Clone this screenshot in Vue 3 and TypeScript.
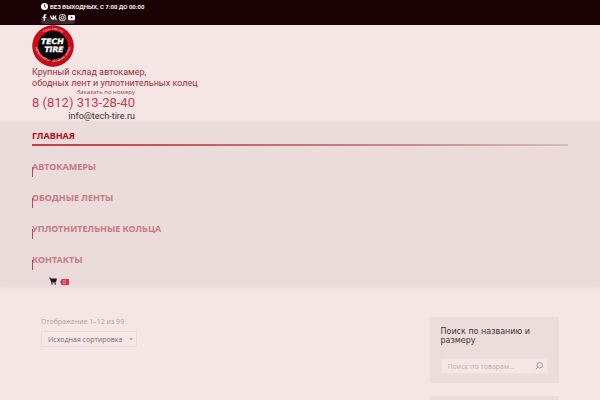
<script setup lang="ts">
import { ref } from 'vue'

const links = ['АВТОКАМЕРЫ', 'ОБОДНЫЕ ЛЕНТЫ', 'УПЛОТНИТЕЛЬНЫЕ КОЛЬЦА', 'КОНТАКТЫ']
const sort = ref('default')
const query = ref('')
</script>

<template>
  <div class="page">
    <div class="topbar">
      <div class="hours">
        <svg class="clock" viewBox="0 0 14 14" aria-hidden="true">
          <circle cx="7" cy="7" r="7" fill="#fff" />
          <path d="M7 2.500V7.500L10 9" fill="none" stroke="#1b0305" stroke-width="1.600" />
        </svg>
        <span>БЕЗ ВЫХОДНЫХ, С 7:00 ДО 00:00</span>
      </div>
      <div class="social">
        <a href="#" aria-label="Facebook">
          <svg viewBox="0 0 16 16"><path fill="#fff" d="M6 15.500V9H3.700V6H6V4.300C6 1.800 7.400.5 9.700.5h2.500v2.900h-1.600c-1 0-1.300.4-1.300 1.200V6h2.900l-.5 3H9.300v6.500z" /></svg>
        </a>
        <a href="#" aria-label="VK">
          <svg viewBox="0 0 16 16"><path fill="#fff" d="M8.600 13C3.600 13 .3 9.500 0 3.300h2.900c.1 4 1.500 5.600 3 6V3.300h3.200v3.300c1.200-.2 2.400-1.600 2.900-3.300h3c-.4 2-1.900 3.800-3.100 4.400 1.200.6 3 2.100 3.900 5.300h-3.300c-.6-1.700-1.700-2.900-3.400-3.100V13z" /></svg>
        </a>
        <a href="#" aria-label="Instagram">
          <svg viewBox="0 0 16 16" fill="none" stroke="#fff" stroke-width="2"><rect x="1.500" y="1.500" width="13" height="13" rx="3.500" /><circle cx="8" cy="8" r="3" /><circle cx="11.700" cy="4.300" r=".3" /></svg>
        </a>
        <a href="#" aria-label="YouTube">
          <svg viewBox="0 0 16 16"><path fill="#fff" fill-rule="evenodd" d="M3.500 2h9C15 2 16 3 16 5.500v5c0 2.500-1 3.500-3.500 3.500h-9C1 14 0 13 0 10.500v-5C0 3 1 2 3.500 2zM6.300 5v6L11.300 8z" /></svg>
        </a>
      </div>
    </div>

    <header class="brand">
      <a class="logo" href="#" aria-label="Tech Tire">
        <svg viewBox="0 0 126 126">
          <defs>
            <path id="ring-top" d="M15 63a48 48 0 0 1 96 0" />
            <path id="ring-bottom" d="M8 55a55 55 0 0 0 110 0" />
          </defs>
          <circle cx="63" cy="63" r="62" fill="#cf0a18" />
          <circle cx="63" cy="63" r="60" fill="none" stroke="#a30d17" stroke-width="2" />
          <circle cx="63" cy="63" r="45" fill="#0b0607" />
          <g class="ring-text">
            <text><textPath href="#ring-top" startOffset="50%" text-anchor="middle">TECH-TIRE.RU</textPath></text>
            <text><textPath href="#ring-bottom" startOffset="50%" text-anchor="middle">АВТОКАМЕРЫ • ОБОДНЫЕ ЛЕНТЫ</textPath></text>
          </g>
          <g class="logo-text">
            <text x="61" y="58" text-anchor="middle">TECH</text>
            <text x="66" y="81" text-anchor="middle">TIRE</text>
          </g>
        </svg>
      </a>
      <p class="tagline">Крупный склад автокамер,<br />ободных лент и уплотнительных колец</p>
      <div class="contacts">
        <span class="order">Заказать по номеру</span>
        <a class="phone" href="tel:88123132840">8 (812) 313-28-40</a>
        <a class="mail" href="mailto:info@tech-tire.ru">info@tech-tire.ru</a>
      </div>
    </header>

    <nav class="menu">
      <a class="item active" href="#">ГЛАВНАЯ</a>
      <a v-for="link in links" :key="link" class="item" href="#">{{ link }}</a>
      <a class="cart" href="#" aria-label="Корзина">
        <svg viewBox="0 0 16 16"><path fill="#231819" d="M0 1h3l.7 2H16l-2 7H5.500l.3 1.200H14v1.300H4.600L2 2.500H0z" /><circle cx="6" cy="14.200" r="1.500" fill="#231819" /><circle cx="12.500" cy="14.200" r="1.500" fill="#231819" /></svg>
        <span class="count">0</span>
      </a>
    </nav>

    <main class="content">
      <section class="listing">
        <p class="result">Отображение 1–12 из 99</p>
        <div class="sort">
          <select v-model="sort" aria-label="Сортировка">
            <option value="default">Исходная сортировка</option>
          </select>
          <svg viewBox="0 0 8 6" aria-hidden="true"><path d="M1.500 2h5L4 4.500z" fill="#a39696" /></svg>
        </div>
      </section>
      <aside class="sidebar">
        <section class="widget">
          <h2>Поиск по названию и размеру</h2>
          <form class="search" @submit.prevent>
            <input v-model="query" type="search" aria-label="Поиск по товарам" placeholder="Поиск по товарам…" />
            <button type="submit" aria-label="Найти">
              <svg viewBox="0 0 16 16" fill="none" stroke="#9b8c8d" stroke-width="1.700"><circle cx="9.500" cy="6.500" r="5.500" /><path d="M5.600 10.400L1.500 14.500" /></svg>
            </button>
          </form>
        </section>
        <section class="widget next"></section>
      </aside>
    </main>
  </div>
</template>

<style>
body {
  margin: 0;
  background: #f5e5e4;
}
</style>

<style scoped>
.page {
  height: 100vh;
  overflow: hidden;
  background: #f5e5e4;
  font-family: "Open Sans", "Noto Sans", sans-serif;
}
a {
  color: inherit;
  text-decoration: none;
}
svg {
  display: block;
}
.topbar {
  display: flex;
  flex-direction: column;
  align-items: flex-start;
  gap: 1px;
  height: 25px;
  padding: 1px 41px 0;
  box-sizing: border-box;
  background: #1b0305;
}
.hours {
  display: flex;
  align-items: center;
  gap: 2px;
  height: 11px;
  color: #f7eeee;
  font: 700 6px/11px Roboto, sans-serif;
}
.clock {
  width: 7px;
  height: 7px;
}
.social {
  display: flex;
  gap: 2px;
  height: 11px;
  padding: 1px 0 0;
  box-sizing: border-box;
  border-radius: 0 0 3px 3px;
  background: linear-gradient(#1b0305 30%, #41292d 60%);
}
.social a {
  display: block;
}
.social svg {
  width: 7px;
  height: 7px;
}
.brand {
  display: flex;
  flex-direction: column;
  align-items: flex-start;
  padding: 0 32px;
}
.logo svg {
  width: 42px;
  height: 42px;
}
.logo-text {
  fill: #fff;
  stroke: #fff;
  stroke-width: 1px;
  font: italic 700 23px "DejaVu Sans", sans-serif;
}
.ring-text {
  fill: #f3b4b5;
  font: 700 9px Roboto, sans-serif;
}
.tagline {
  margin: 0;
  color: #a13039;
  font: 9px/11px Roboto, sans-serif;
}
.contacts {
  display: flex;
  flex-direction: column;
  align-items: flex-end;
  height: 32px;
}
.order {
  color: #a93c44;
  font: 6px/6px "Open Sans", sans-serif;
}
.phone {
  color: #c93f48;
  font: 13px/15px Roboto, sans-serif;
}
.mail {
  color: #3d2c2e;
  font: 9px/12px Roboto, sans-serif;
}
.menu {
  display: flex;
  flex-direction: column;
  padding: 0 32px;
  height: 166px;
  background: #ebdcdb;
  box-shadow: 0 2px 3px #ebdcdb;
}
.item {
  position: relative;
  height: 31px;
  color: #c67b80;
  font: 700 9px/30px "Noto Sans", sans-serif;
}
.item::before {
  content: "";
  position: absolute;
  left: 0;
  top: 15px;
  width: 1px;
  height: 10px;
  background: #b94850;
}
.item.active {
  color: #b10f1b;
}
.item.active::before {
  top: 23px;
  width: 100%;
  height: 2px;
  background: linear-gradient(90deg, #c53b43, #c9898c 70%, #d0bfbf);
}
.cart {
  display: flex;
  align-items: center;
  gap: 3px;
  padding-left: 17px;
  height: 9px;
}
.cart svg {
  width: 8px;
  height: 8px;
}
.count {
  width: 9px;
  margin-top: 3px;
  background: #cf3e48;
  clip-path: polygon(0 50%, 20% 0, 100% 0, 100% 100%, 20% 100%);
  color: #f0b8bb;
  font: 5px/6px Roboto, sans-serif;
  text-align: center;
}
.content {
  display: flex;
  justify-content: space-between;
  padding: 30px 41px 0;
}
.result {
  margin: 0 0 4px;
  color: #b5a5a5;
  font: 7px/10px "Noto Sans", sans-serif;
}
.sort {
  position: relative;
  width: 96px;
}
.sort select {
  display: block;
  width: 100%;
  height: 16px;
  box-sizing: border-box;
  padding: 0 6px;
  border: 1px solid #eadada;
  border-radius: 0;
  appearance: none;
  background: #f6e8e7;
  color: #796b6c;
  font: 7px "Open Sans", sans-serif;
}
.sort svg {
  position: absolute;
  right: 3px;
  top: 5px;
  width: 6px;
  height: 6px;
  pointer-events: none;
}
.sidebar {
  display: flex;
  flex-direction: column;
  gap: 13px;
  width: 25%;
}
.widget {
  padding: 10px 11px 9px;
  background: #ecdddc;
}
.widget h2 {
  margin: 0 0 13px;
  color: #413234;
  font: 8px/9px "DejaVu Sans", sans-serif;
}
.search {
  display: flex;
  height: 16px;
  border: 1px solid #efdfdf;
  box-sizing: border-box;
  background: #f5e5e4;
}
.search input {
  flex: 1;
  min-width: 0;
  padding: 0 6px;
  border: 0;
  appearance: none;
  outline: none;
  background: transparent;
  color: #796b6c;
  font: 7px "Open Sans", sans-serif;
}
.search input::placeholder {
  color: #bfafaf;
}
.search button {
  display: flex;
  align-items: center;
  padding: 0 4px;
  border: 0;
  background: transparent;
}
.search button svg {
  width: 8px;
  height: 8px;
}
.next {
  height: 60px;
}
</style>
